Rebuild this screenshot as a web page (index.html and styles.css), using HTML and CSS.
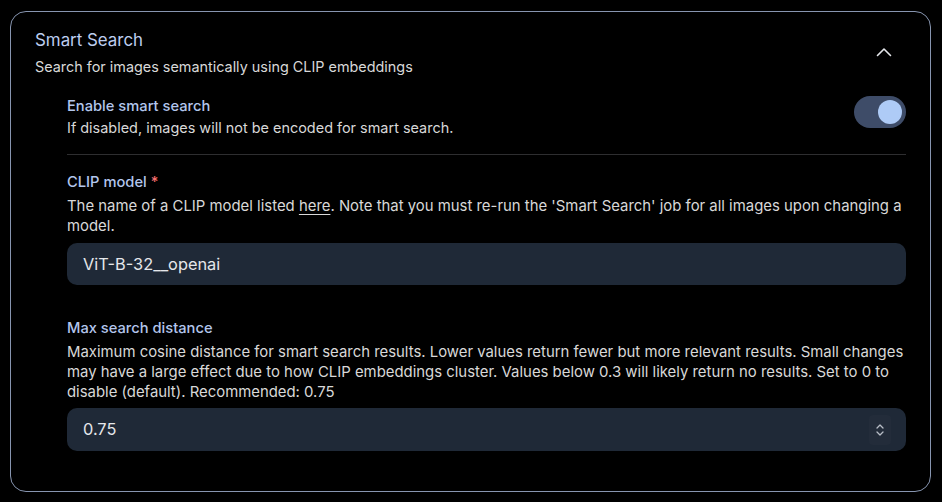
FILE: index.html
```html
<!DOCTYPE html>
<html lang="en">
<head>
<meta charset="utf-8">
<title>Smart Search</title>
<link rel="stylesheet" href="styles.css">
</head>
<body>
<section class="card">
  <header class="card-head">
    <div class="head-text">
      <h2 class="title">Smart Search</h2>
      <p class="subtitle">Search for images semantically using CLIP embeddings</p>
    </div>
    <button class="collapse" type="button" aria-label="Collapse">
      <svg width="16" height="10" viewBox="0 0 16 10"><polyline points="1.5,8.5 8,2 14.5,8.5" fill="none" stroke="#e5e7eb" stroke-width="1.6" stroke-linecap="round" stroke-linejoin="round"/></svg>
    </button>
  </header>

  <div class="content">
    <div class="setting toggle-row">
      <div class="setting-text">
        <div class="label">Enable smart search</div>
        <p class="desc desc-short">If disabled, images will not be encoded for smart search.</p>
      </div>
      <div class="switch"><span class="knob"></span></div>
    </div>

    <hr class="sep">

    <div class="setting field">
      <div class="label">CLIP model <span class="req">*</span></div>
      <p class="desc">The name of a CLIP model listed <a class="link" href="#">here</a>. Note that you must re-run the 'Smart Search' job for all images upon changing a model.</p>
      <div class="input">ViT-B-32__openai</div>
    </div>

    <div class="setting field field-2">
      <div class="label">Max search distance</div>
      <p class="desc">Maximum cosine distance for smart search results. Lower values return fewer but more relevant results. Small changes may have a large effect due to how CLIP embeddings cluster. Values below 0.3 will likely return no results. Set to 0 to disable (default). Recommended: 0.75</p>
      <div class="input number">
        <span>0.75</span>
        <span class="spin">
          <svg width="10" height="14" viewBox="0 0 10 14"><polyline points="2,5 5,2 8,5" fill="none" stroke="#b8bdc6" stroke-width="1.3" stroke-linecap="round" stroke-linejoin="round"/><polyline points="2,9 5,12 8,9" fill="none" stroke="#b8bdc6" stroke-width="1.3" stroke-linecap="round" stroke-linejoin="round"/></svg>
        </span>
      </div>
    </div>
  </div>
</section>
</body>
</html>
```

FILE: styles.css
```css
* { box-sizing: border-box; }
html, body { margin: 0; padding: 0; background: #000; }
body {
  font-family: Inter, "Noto Sans", "Liberation Sans", sans-serif;
  color: #d4d4d4;
  padding: 11px 11px 10px 10px;
}
.card {
  border: 1px solid #8795b0;
  border-radius: 16px;
  background: #000;
  padding: 16px 24px 40px 24px;
}
.card-head {
  display: flex;
  align-items: center;
  justify-content: space-between;
}
.title {
  margin: 0;
  font-size: 16.9px;
  font-weight: 400;
  line-height: 24px;
  color: #bdcdef;
}
.subtitle {
  margin: 5px 0 0;
  font-size: 14.4px;
  line-height: 20px;
  color: #d8d8d8;
}
.collapse {
  width: 40px;
  height: 40px;
  margin-right: 2px;
  margin-top: -2px;
  border: 0;
  border-radius: 50%;
  background: transparent;
  display: flex;
  align-items: center;
  justify-content: center;
  padding: 0;
}
.content {
  padding-left: 32px;
  margin-top: 19px;
}
.label {
  font-size: 14.7px;
  font-weight: 500;
  line-height: 20px;
  color: #b3c6ec;
}
.req { color: #f87171; }
.desc {
  margin: 2px 0 0;
  font-size: 14.9px;
  line-height: 20px;
  color: #d8d8d8;
}
.desc-short { font-size: 14.45px; }
.toggle-row {
  display: flex;
  justify-content: space-between;
  align-items: flex-start;
  padding-bottom: 16px;
}
.switch {
  width: 52px;
  height: 32px;
  border-radius: 16px;
  background: #3e4c68;
  display: flex;
  align-items: center;
  justify-content: flex-end;
  padding-right: 4px;
  flex: none;
}
.knob {
  width: 24px;
  height: 24px;
  border-radius: 50%;
  background: #aecbf6;
}
.sep {
  border: 0;
  border-top: 1px solid #2e2e30;
  margin: 0;
}
.field { margin-top: 17px; }
.field .desc { margin-top: 4px; }
.field-2 { margin-top: 33px; }
.link { color: #d8d8d8; text-decoration: underline; text-underline-offset: 3px; }
.input {
  margin-top: 7px;
  height: 42px;
  border-radius: 10px;
  background: #1f2937;
  font-size: 16.35px;
  line-height: 42px;
  padding: 0 16px;
  color: #e5e7eb;
}
.field-2 .input { margin-top: 6px; height: 43px; line-height: 43px; }
.number {
  display: flex;
  justify-content: space-between;
  align-items: center;
  padding-right: 15px;
}
.spin {
  display: flex;
  align-items: center;
  justify-content: center;
  width: 22px;
  height: 30px;
  border-radius: 4px;
  background: #232c3a;
}
```
